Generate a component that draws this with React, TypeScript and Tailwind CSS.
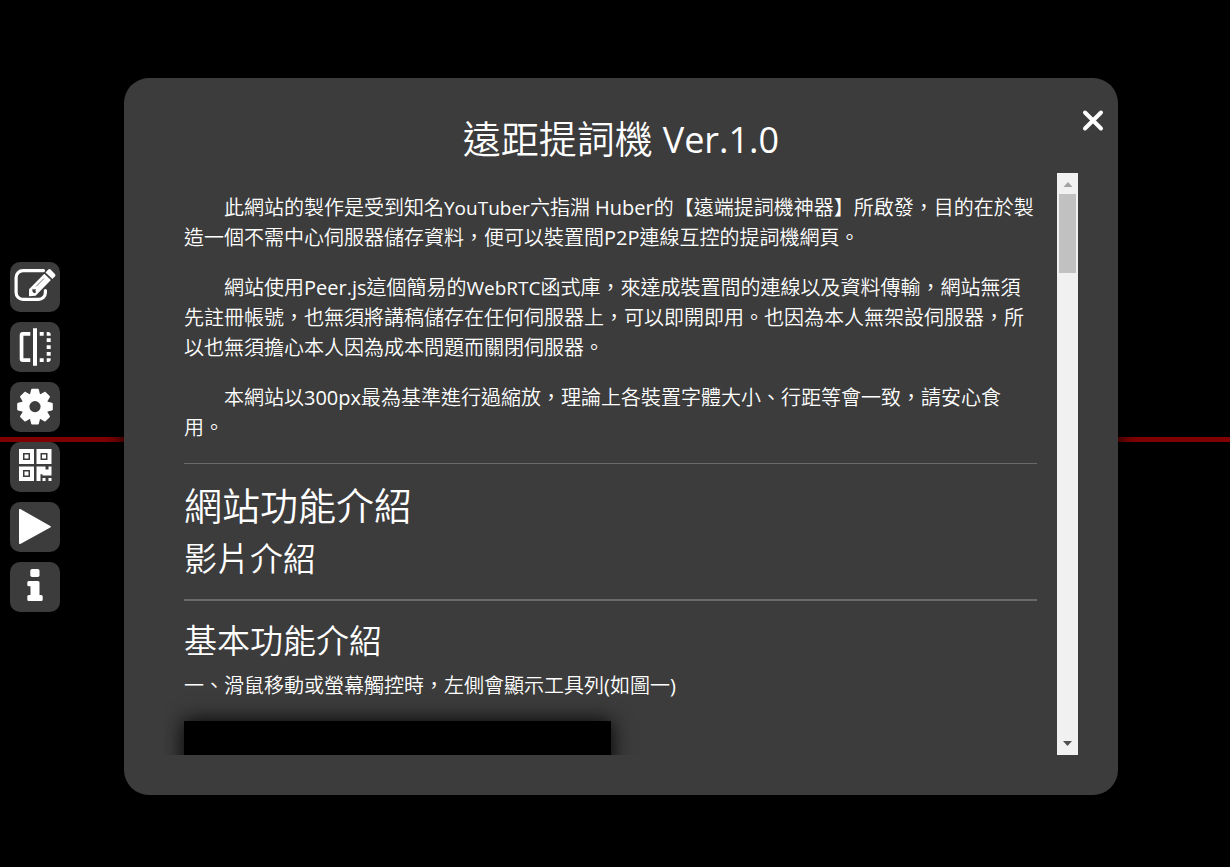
import type { ReactNode } from 'react';

function EditIcon() {
  return (
    <svg viewBox="0 0 50 50" className="size-full" fill="none" aria-hidden="true">
      <path
        d="M33.500 8.600H13a6.900 6.900 0 0 0-6.900 6.900v15a6.900 6.900 0 0 0 6.900 6.900h15.500a6.900 6.900 0 0 0 6.900-6.900v-2"
        stroke="white"
        strokeWidth="3.2"
        strokeLinecap="round"
      />
      <path d="M19 27.300 34.300 11.700l6.600 6.400L25.600 33.800 19 34.200z" fill="white" stroke="#3c3c3c" strokeWidth="2.4" />
      <path d="M19 27.300 34.300 11.700l6.600 6.400L25.600 33.800 19 34.200z" fill="white" />
      <path d="m35.500 10.400 2.600-2.600a1.900 1.900 0 0 1 2.700 0l4.100 4.100a1.900 1.900 0 0 1 0 2.700l-2.600 2.500z" fill="white" />
      <path d="m26.300 24.300 7.600-7.700" stroke="#3c3c3c" strokeWidth="0.7" />
      <path d="m22.500 26.700 1.400.9 1.900-.6-.4 1.900.8 1.400-2.100.9-1.700-1.600z" fill="#3c3c3c" />
    </svg>
  );
}

function MirrorIcon() {
  return (
    <svg viewBox="0 0 50 50" className="size-full" fill="white" aria-hidden="true">
      <path d="M20.300 10v3.700h-6.900v22.600h6.900V40h-7.600a3 3 0 0 1-3-3V13a3 3 0 0 1 3-3z" />
      <path d="M23 6.300h4v37.400h-4zM29.700 10h4v3.700h-4zM29.700 36.300h4V40h-4z" />
      <path d="M36.700 10H38a2.700 2.700 0 0 1 2.700 2.700v1h-4zM36.700 16.300h4V20h-4zM36.700 23.200h4v3.700h-4zM36.700 30h4v3.700h-4zM36.700 36.300h4v1A2.700 2.700 0 0 1 38 40h-1.300z" />
    </svg>
  );
}

const toothAngles = [0, 45, 90, 135, 180, 225, 270, 315];

function GearIcon() {
  return (
    <svg viewBox="0 0 50 50" className="size-full" fill="white" aria-hidden="true">
      <circle cx="25" cy="24.600" r="13.400" />
      {toothAngles.map((angle) => (
        <path
          key={angle}
          d="M19.800 13 21.100 7.700c.2-.7.500-.9 1-.9h5.800c.5 0 .8.200 1 .9L30.200 13z"
          transform={`rotate(${angle} 25 24.600)`}
        />
      ))}
      <circle cx="25" cy="24.600" r="5.600" fill="#3c3c3c" />
    </svg>
  );
}

function QrIcon() {
  return (
    <svg viewBox="0 0 50 50" className="size-full" fill="white" fillRule="evenodd" aria-hidden="true">
      <path d="M9 7h15v15H9zM13 11v7h7v-7zM14.500 12.500h4v4h-4z" />
      <path d="M26.500 7h15v15h-15zM30.500 11v7h7v-7zM32 12.500h4v4h-4z" />
      <path d="M9 24.500h15v14.500H9zM13 28v7h7v-7zM14.500 29.500h4v4h-4z" />
      <path d="M41.500 24.500v9h-9v-1.200h-2V39h-4V24.500h9v3h3v-3zM32.500 36h3v3h-3zM38.500 36h3v3h-3z" />
    </svg>
  );
}

function PlayIcon() {
  return (
    <svg viewBox="0 0 50 50" className="size-full" fill="white" aria-hidden="true">
      <path d="M9 7.800c0-.8.700-1.100 1.300-.7l30 16.800c.7.400.7 1.200 0 1.600l-30 16.500c-.6.300-1.300 0-1.300-.7z" />
    </svg>
  );
}

function InfoIcon() {
  return (
    <svg viewBox="0 0 50 50" className="size-full" fill="white" aria-hidden="true">
      <rect x="20.300" y="7" width="9.200" height="8" rx="1.800" />
      <path d="M18.800 19h9.200a1.500 1.500 0 0 1 1.500 1.500V33h1.700a1.500 1.500 0 0 1 1.500 1.500v3a1.500 1.500 0 0 1-1.500 1.500H18.800a1.500 1.500 0 0 1-1.500-1.500v-3a1.500 1.500 0 0 1 1.500-1.500h1.700v-8.700h-1.700a1.500 1.500 0 0 1-1.500-1.500v-2.300a1.500 1.500 0 0 1 1.500-1.500z" />
    </svg>
  );
}

function ToolButton({ label, children }: { label: string; children: ReactNode }) {
  return (
    <button type="button" aria-label={label} className="size-[50px] rounded-[10px] bg-[#3c3c3c]">
      {children}
    </button>
  );
}

function Term({ children }: { children: ReactNode }) {
  return <span className="text-[19px]">{children}</span>;
}

function Paragraph({ children }: { children: ReactNode }) {
  return <p className="mb-[20px] indent-[40px]">{children}</p>;
}

function Scrollbar() {
  return (
    <div aria-hidden="true" className="flex w-[21px] shrink-0 flex-col items-center justify-between bg-[#f1f1f1]">
      <div className="flex w-full flex-col items-center">
        <svg viewBox="0 0 21 21" className="size-[21px]">
          <path d="M6.500 14h9L11 9z" fill="#a3a3a3" />
        </svg>
        <div className="h-[79px] w-[17px] bg-[#c1c1c1]" />
      </div>
      <svg viewBox="0 0 21 21" className="size-[21px]">
        <path d="M6 7h9l-4.500 5z" fill="#505050" />
      </svg>
    </div>
  );
}

export default function App() {
  return (
    <div
      lang="zh-TW"
      className="relative flex h-screen bg-black pt-[78px] pr-[112px] pb-[72px] font-['Open_Sans','Noto_Sans_CJK_TC_DemiLight','Noto_Sans_CJK_TC',sans-serif] text-[20px] leading-[30px] text-white"
    >
      <div className="absolute inset-x-0 top-[437px] h-[5px] bg-[#800000]" />

      <nav aria-label="工具列" className="relative flex w-[124px] shrink-0 flex-col justify-center gap-[10px] pt-px pl-[10px]">
        <ToolButton label="編輯"><EditIcon /></ToolButton>
        <ToolButton label="鏡像"><MirrorIcon /></ToolButton>
        <ToolButton label="設定"><GearIcon /></ToolButton>
        <ToolButton label="連線"><QrIcon /></ToolButton>
        <ToolButton label="播放"><PlayIcon /></ToolButton>
        <ToolButton label="說明"><InfoIcon /></ToolButton>
      </nav>

      <main className="relative flex min-w-0 flex-1 flex-col rounded-[25px] bg-[#3c3c3c] px-[40px] pb-[40px] shadow-[0_0_20px_black]">
        <h1 className="flex h-[95px] shrink-0 items-center justify-center pt-[26px] text-[38px] font-[350]">
          <span>遠距提詞機 <span className="text-[36px] font-normal">Ver.1.0</span></span>
        </h1>
        <button type="button" aria-label="關閉" className="absolute top-[30px] right-[13px] size-[24px]">
          <svg viewBox="0 0 24 24" className="size-full" stroke="white" strokeWidth="4" strokeLinecap="round" aria-hidden="true">
            <path d="m4 4.500 16 16M20 4.500l-16 16" />
          </svg>
        </button>

        <div className="flex min-h-0 flex-1">
          <div className="min-w-0 flex-1 overflow-hidden px-[20px] pt-[20px]">
            <Paragraph>
              此網站的製作是受到知名<Term>YouTuber</Term>六指淵 Huber的【遠端提詞機神器】所啟發，目的在於製造一個不需中心伺服器儲存資料，便可以裝置間P2P連線互控的提詞機網頁。
            </Paragraph>
            <Paragraph>
              網站使用Peer.js這個簡易的<Term>WebRTC</Term>函式庫，來達成裝置間的連線以及資料傳輸，網站無須先註冊帳號，也無須將講稿儲存在任何伺服器上，可以即開即用。也因為本人無架設伺服器，所以也無須擔心本人因為成本問題而關閉伺服器。
            </Paragraph>
            <Paragraph>
              本網站以300px最為基準進行過縮放，理論上各裝置字體大小、行距等會一致，請安心食用。
            </Paragraph>
            <hr className="mb-[20px] border-t border-[#6b6b6b]" />
            <h2 className="mb-[12px] text-[38px] leading-[43px] font-[350]">網站功能介紹</h2>
            <h3 className="mb-[20px] text-[33px] leading-[40px] font-[350]">影片介紹</h3>
            <hr className="mb-[20px] border-t-2 border-[#6b6b6b]" />
            <h3 className="mb-[10px] text-[33px] leading-[40px] font-[350]">基本功能介紹</h3>
            <p className="mb-[20px]">一、滑鼠移動或螢幕觸控時，左側會顯示工具列(如圖一)</p>
            <div className="h-[240px] w-1/2 bg-black shadow-[0_0_20px_black]" />
          </div>
          <Scrollbar />
        </div>
      </main>
    </div>
  );
}
